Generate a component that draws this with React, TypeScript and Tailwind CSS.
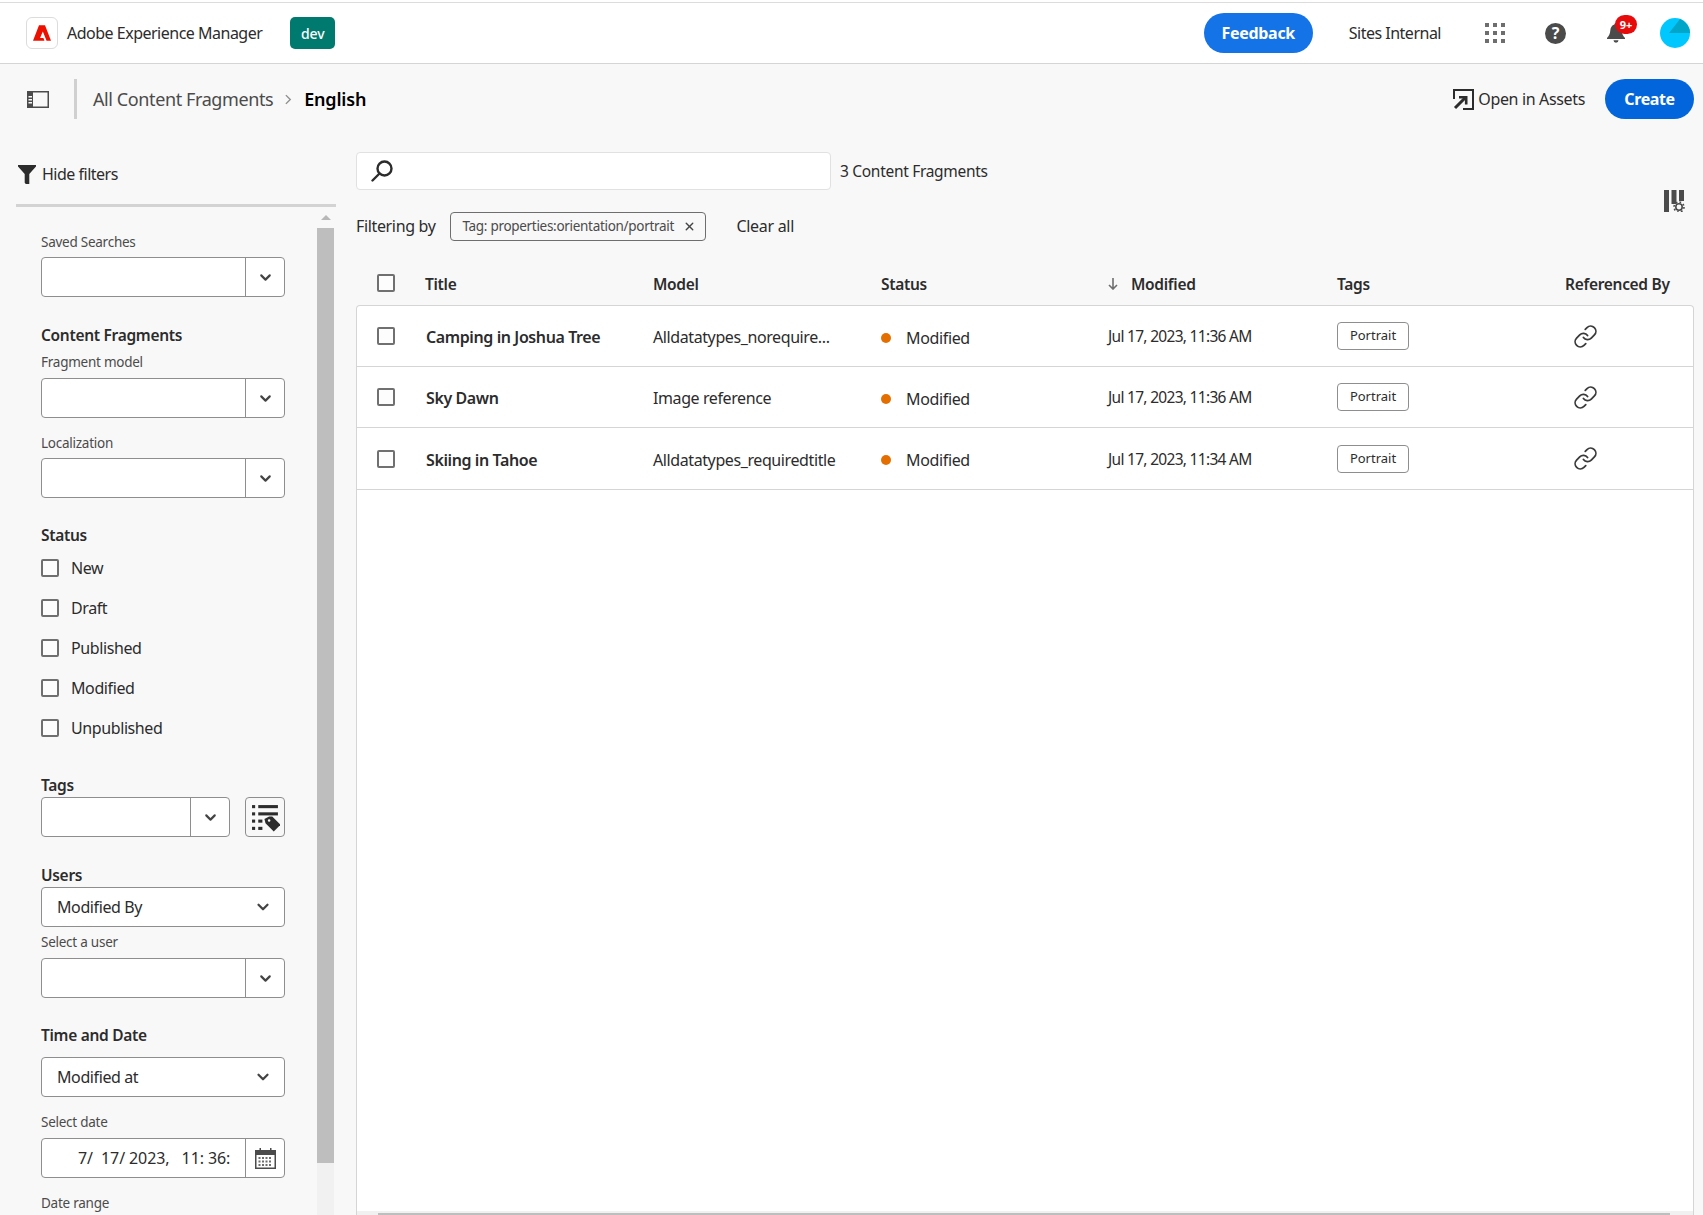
import { ChevronDown, Link as LinkIcon, X } from 'lucide-react';

const rows = [
  { title: 'Camping in Joshua Tree', model: 'Alldatatypes_norequire...', date: 'Jul 17, 2023, 11:36 AM', h: 'h-[61px]' },
  { title: 'Sky Dawn', model: 'Image reference', date: 'Jul 17, 2023, 11:36 AM', h: 'h-[61px]' },
  { title: 'Skiing in Tahoe', model: 'Alldatatypes_requiredtitle', date: 'Jul 17, 2023, 11:34 AM', h: 'h-[62px]' },
];

const statuses = ['New', 'Draft', 'Published', 'Modified', 'Unpublished'];

function Checkbox() {
  return <span className="block w-[18px] h-[18px] rounded-[2px] border-2 border-[#707070] bg-[#fdfdfd]" />;
}

function Combo({ className = '', wide = true, children }: { className?: string; wide?: boolean; children?: React.ReactNode }) {
  return (
    <div className={`flex h-[40px] ${wide ? 'w-[244px]' : 'w-[189px]'} rounded-[4px] border border-[#8e8e8e] bg-white ${className}`}>
      <div className="flex-1 min-w-0 flex items-center">{children}</div>
      <div className="w-[39px] shrink-0 border-l border-[#8e8e8e] flex items-center justify-center">
        <ChevronDown size={17} strokeWidth={3} className="text-[#444]" />
      </div>
    </div>
  );
}

function Select({ label, className = '' }: { label: string; className?: string }) {
  return (
    <div className={`flex h-[40px] w-[244px] items-center justify-between rounded-[4px] border border-[#8e8e8e] bg-white pl-[15px] pr-[12px] text-[16px] tracking-[-0.4px] text-[#2c2c2c] ${className}`}>
      <span>{label}</span>
      <ChevronDown size={18} strokeWidth={3} className="text-[#444]" />
    </div>
  );
}

function SmallLabel({ children, className = '' }: { children: React.ReactNode; className?: string }) {
  return <div className={`h-[20px] leading-[20px] text-[13.5px] tracking-[-0.25px] text-[#4b4b4b] ${className}`}>{children}</div>;
}

function Heading({ children, className = '' }: { children: React.ReactNode; className?: string }) {
  return <div className={`h-[22px] leading-[22px] text-[15.5px] font-semibold tracking-[-0.3px] text-[#2c2c2c] ${className}`}>{children}</div>;
}

function AdobeMark() {
  return (
    <svg viewBox="0 0 30 26" className="w-[18px] h-[16px]" fill="#eb1000">
      <path d="M10 0h10l10 26h-7.4l-6.2-15.5-4.6 11h5.6l1.7 4.5H0z" />
    </svg>
  );
}

function GridIcon() {
  return (
    <svg viewBox="0 0 20 20" className="w-[20px] h-[20px]" fill="#6e6e6e">
      <rect x="0" y="0" width="4" height="4" /><rect x="8" y="0" width="4" height="4" /><rect x="16" y="0" width="4" height="4" />
      <rect x="0" y="8" width="4" height="4" /><rect x="8" y="8" width="4" height="4" /><rect x="16" y="8" width="4" height="4" />
      <rect x="0" y="16" width="4" height="4" /><rect x="8" y="16" width="4" height="4" /><rect x="16" y="16" width="4" height="4" />
    </svg>
  );
}

function HelpIcon() {
  return (
    <span className="flex w-[21px] h-[21px] items-center justify-center rounded-full bg-[#4b4b4b] text-[16px] font-bold leading-none text-white">?</span>
  );
}

function BellIcon() {
  return (
    <svg viewBox="0 0 18 20" className="w-[18px] h-[20px]" fill="#4b4b4b">
      <path d="M9 0c-1 0-1.6.7-1.6 1.6C4.8 2.4 3.6 4.6 3.3 7.4 3 10.6 2.3 12.6 0 15v1h18v-1c-2.3-2.4-3-4.4-3.3-7.6-.3-2.8-1.5-5-4.1-5.8C10.6.7 10 0 9 0zM6.5 17.2a2.5 2.5 0 0 0 5 0z" />
    </svg>
  );
}

function PanelIcon() {
  return (
    <svg viewBox="0 0 22 17" className="w-[22px] h-[17px]">
      <rect x="0.75" y="0.75" width="20.5" height="15.5" fill="none" stroke="#4b4b4b" strokeWidth="1.5" />
      <rect x="0" y="0" width="6" height="17" fill="#4b4b4b" />
      <rect x="1.5" y="5" width="3.5" height="1.5" fill="#f8f8f8" />
      <rect x="1.5" y="8" width="3.5" height="1.5" fill="#f8f8f8" />
      <rect x="1.5" y="11" width="3.5" height="1.5" fill="#f8f8f8" />
    </svg>
  );
}

function FunnelIcon() {
  return (
    <svg viewBox="0 0 18 19" className="w-[18px] h-[19px]" fill="#2c2c2c">
      <path d="M0 0h18v1.5l-6.7 7.6V19H7.8l-1.1-1.2V9.1L0 1.5z" />
    </svg>
  );
}

function SearchIcon() {
  return (
    <svg viewBox="0 0 22 22" className="w-[22px] h-[22px]" fill="none" stroke="#2c2c2c" strokeWidth="2.4">
      <circle cx="13.5" cy="8.5" r="7" />
      <path d="M8.5 13.5 1.5 20.5" strokeLinecap="round" />
    </svg>
  );
}

function OpenInIcon() {
  return (
    <svg viewBox="0 0 21 21" className="w-[21px] h-[21px]" fill="none" stroke="#2c2c2c">
      <path d="M1 10V1h19v19H10" strokeWidth="2" />
      <path d="M2 19 13 8" strokeWidth="3" />
      <path d="M6 7h8.5v8.5h-2.6V9.6H6z" fill="#2c2c2c" stroke="none" />
    </svg>
  );
}

function ColumnsIcon() {
  return (
    <svg viewBox="0 0 21 22" className="w-[21px] h-[22px]">
      <rect x="0" y="0" width="5" height="22" fill="#4b4b4b" />
      <rect x="7.5" y="0" width="5" height="14" fill="#4b4b4b" />
      <rect x="15" y="0" width="5" height="11" fill="#4b4b4b" />
      <circle cx="15" cy="17" r="3.2" fill="none" stroke="#4b4b4b" strokeWidth="1.6" />
      <circle cx="15" cy="17" r="5" fill="none" stroke="#4b4b4b" strokeWidth="1.6" strokeDasharray="1.8 2.1" />
    </svg>
  );
}

function TagListIcon() {
  return (
    <svg viewBox="0 0 28 28" className="w-[29px] h-[29px]" fill="#2c2c2c">
      <rect x="1" y="2" width="3" height="3" /><rect x="7" y="2" width="19" height="3" />
      <rect x="1" y="9" width="3" height="3" /><rect x="7" y="9" width="19" height="3" />
      <rect x="1" y="16" width="3" height="3" /><rect x="7" y="16" width="4" height="3" />
      <rect x="1" y="23" width="3" height="3" /><rect x="7" y="23" width="4" height="3" />
      <path d="M13 15.5 17.5 13h3l8 8-6.5 6.5-8-8z" />
      <circle cx="17.5" cy="17" r="1.2" fill="#f8f8f8" />
    </svg>
  );
}

function CalendarIcon() {
  return (
    <svg viewBox="0 0 21 21" className="w-[21px] h-[21px]">
      <rect x="0.75" y="2.75" width="19.5" height="17.5" fill="none" stroke="#4b4b4b" strokeWidth="1.5" />
      <rect x="1" y="3" width="19" height="4" fill="#4b4b4b" />
      <rect x="4.5" y="0" width="1.5" height="4" fill="#4b4b4b" /><rect x="15" y="0" width="1.5" height="4" fill="#4b4b4b" />
      <path d="M3.5 9h2v2h-2zM7 9h2v2H7zM10.5 9h2v2h-2zM14 9h2v2h-2zM3.5 12.5h2v2h-2zM7 12.5h2v2H7zM10.5 12.5h2v2h-2zM14 12.5h2v2h-2zM3.5 16h2v2h-2zM7 16h2v2H7zM10.5 16h2v2h-2zM14 16h2v2h-2z" fill="#6e6e6e" />
    </svg>
  );
}

function Filters() {
  return (
    <div className="w-[299px] shrink-0 overflow-hidden pl-[25px] pt-[25px]">
      <SmallLabel>Saved Searches</SmallLabel>
      <Combo className="mt-[5px]" />
      <Heading className="mt-[27px]">Content Fragments</Heading>
      <SmallLabel className="mt-[6px]">Fragment model</SmallLabel>
      <Combo className="mt-[6px]" />
      <SmallLabel className="mt-[15px]">Localization</SmallLabel>
      <Combo className="mt-[5px]" />
      <Heading className="mt-[26px]">Status</Heading>
      <div className="mt-[2px]">
        {statuses.map((s) => (
          <div key={s} className="flex h-[40px] items-center gap-[12px] text-[16px] tracking-[-0.4px] text-[#2c2c2c]">
            <Checkbox />
            <span>{s}</span>
          </div>
        ))}
      </div>
      <Heading className="mt-[26px]">Tags</Heading>
      <div className="mt-[1px] flex w-[244px] justify-between">
        <Combo wide={false} />
        <button className="flex h-[40px] w-[40px] items-center justify-center rounded-[4px] border border-[#8e8e8e] bg-[#f8f8f8]">
          <TagListIcon />
        </button>
      </div>
      <Heading className="mt-[27px]">Users</Heading>
      <Select label="Modified By" className="mt-[1px]" />
      <SmallLabel className="mt-[5px]">Select a user</SmallLabel>
      <Combo className="mt-[6px]" />
      <Heading className="mt-[26px]">Time and Date</Heading>
      <Select label="Modified at" className="mt-[11px]" />
      <SmallLabel className="mt-[15px]">Select date</SmallLabel>
      <div className="mt-[6px] flex h-[40px] w-[244px] rounded-[4px] border border-[#8e8e8e] bg-white">
        <div className="flex-1 min-w-0 overflow-hidden whitespace-pre pl-[36px] text-[16px] leading-[38px] tracking-[-0.1px] text-[#2c2c2c]">7/  17/ 2023,   11: 36:</div>
        <div className="w-[39px] shrink-0 border-l border-[#8e8e8e] flex items-center justify-center">
          <CalendarIcon />
        </div>
      </div>
      <SmallLabel className="mt-[15px]">Date range</SmallLabel>
    </div>
  );
}

function TableGridRow({ children, className = '' }: { children: React.ReactNode; className?: string }) {
  return (
    <div className={`grid grid-cols-[48px_228px_228px_227px_229px_228px_1fr] items-center ${className}`}>{children}</div>
  );
}

export default function App() {
  return (
    <div className="flex h-[1215px] w-full flex-col overflow-hidden bg-[#f8f8f8] font-['Noto_Sans',sans-serif] text-[#2c2c2c]">
      <header className="h-[64px] shrink-0 bg-white pt-[2px]">
        <div className="flex h-[62px] items-center border-y border-t-[#dcdcdc] border-b-[#d5d5d5] pl-[26px] pr-[13px]">
          <div className="flex h-[32px] w-[32px] items-center justify-center rounded-[6px] border border-[#dcdcdc] bg-white">
            <AdobeMark />
          </div>
          <span className="ml-[9px] text-[16px] tracking-[-0.5px]">Adobe Experience Manager</span>
          <span className="ml-[28px] flex h-[32px] w-[45px] items-center justify-center rounded-[5px] bg-[#007a6f] text-[14px] font-medium text-white">dev</span>
          <button className="ml-auto flex h-[40px] w-[109px] items-center justify-center rounded-full bg-[#1473e6] text-[16px] font-bold tracking-[-0.3px] text-white">Feedback</button>
          <span className="ml-[36px] text-[16px] tracking-[-0.5px]">Sites Internal</span>
          <span className="ml-[44px]"><GridIcon /></span>
          <span className="ml-[40px]"><HelpIcon /></span>
          <span className="relative ml-[41px] block">
            <BellIcon />
            <span className="absolute -right-[12px] -top-[8px] flex h-[19px] w-[22px] items-center justify-center rounded-full bg-[#e80b0b] text-[11px] font-bold leading-none text-white">9+</span>
          </span>
          <svg viewBox="0 0 30 30" className="ml-[35px] h-[30px] w-[30px]">
            <circle cx="15" cy="15" r="15" fill="#00c8ff" />
            <path d="M9 15 20 1a15 15 0 0 1 10 14z" fill="#00a5c8" />
          </svg>
        </div>
      </header>

      <div className="flex h-[70px] shrink-0 items-center pl-[27px] pr-[9px]">
        <PanelIcon />
        <span className="ml-[25px] h-[40px] w-[3px] bg-[#d0d0d0]" />
        <span className="ml-[16px] text-[18px] tracking-[-0.4px] text-[#4b4b4b]">All Content Fragments</span>
        <svg viewBox="0 0 8 12" className="ml-[12px] h-[11px] w-[7px]" fill="none" stroke="#8e8e8e" strokeWidth="1.6">
          <path d="M1 1l5 5-5 5" />
        </svg>
        <span className="ml-[12px] text-[18px] font-semibold tracking-[-0.2px] text-black">English</span>
        <span className="ml-auto"><OpenInIcon /></span>
        <span className="ml-[4px] text-[16px] tracking-[-0.35px]">Open in Assets</span>
        <button className="ml-[20px] flex h-[40px] w-[89px] items-center justify-center rounded-full bg-[#0265dc] text-[16px] font-bold tracking-[-0.4px] text-white">Create</button>
      </div>

      <div className="flex min-h-0 flex-1">
        <aside className="ml-[16px] flex w-[320px] shrink-0 flex-col">
          <div className="flex h-[73px] shrink-0 items-center gap-[6px] border-b-[3px] border-[#d3d3d3] pl-[2px] pt-[10px] text-[16px]">
            <FunnelIcon />
            <span className="tracking-[-0.5px]">Hide filters</span>
          </div>
          <div className="flex min-h-0 flex-1">
            <Filters />
            <div className="flex w-[21px] flex-col bg-[#f8f8f8] pl-[2px] pr-[2px]">
              <div className="flex h-[21px] shrink-0 items-center justify-center">
                <span className="block h-0 w-0 border-x-[5px] border-b-[5px] border-x-transparent border-b-[#b8b8b8]" />
              </div>
              <div className="h-[935px] shrink-0 bg-[#bebebe]" />
              <div className="flex-1 bg-[#f1f1f1]" />
            </div>
          </div>
        </aside>

        <main className="ml-[20px] mr-[9px] flex min-w-0 flex-1 flex-col pt-[18px]">
          <div className="flex items-center">
            <div className="flex h-[38px] w-[475px] items-center rounded-[4px] border border-[#e1e1e1] bg-white pl-[14px]">
              <SearchIcon />
            </div>
            <span className="ml-[9px] pt-[2px] text-[15.5px] tracking-[-0.3px]">3 Content Fragments</span>
          </div>
          <div className="mt-[22px] flex h-[29px] items-center">
            <span className="-mt-[1px] text-[16px] tracking-[-0.35px]">Filtering by</span>
            <span className="ml-[15px] flex h-[29px] w-[256px] items-center justify-between rounded-[4px] border border-[#6e6e6e] pl-[11px] pr-[9px] text-[13.5px] tracking-[-0.3px] text-[#4b4b4b]">
              Tag: properties:orientation/portrait
              <X size={13} strokeWidth={2.5} className="text-[#444]" />
            </span>
            <span className="-mt-[1px] ml-[30px] text-[16px] tracking-[-0.3px]">Clear all</span>
            <span className="-mt-[22px] ml-auto mr-[9px] self-start"><ColumnsIcon /></span>
          </div>
          <TableGridRow className="h-[64px] shrink-0 pl-[21px] pt-[20px] text-[15.5px] font-semibold tracking-[-0.3px]">
            <Checkbox />
            <span className="pt-[4px]">Title</span>
            <span className="pt-[4px]">Model</span>
            <span className="pt-[4px]">Status</span>
            <span className="flex items-center gap-[13px] pt-[4px]">
              <svg viewBox="0 0 10 12" className="-mt-[3px] h-[12px] w-[10px]" fill="none" stroke="#6e6e6e" strokeWidth="1.6">
                <path d="M5 0v11M1 7l4 4 4-4" />
              </svg>
              Modified
            </span>
            <span className="pt-[4px]">Tags</span>
            <span className="pt-[4px]">Referenced By</span>
          </TableGridRow>

          <div className="flex min-h-0 flex-1 flex-col rounded-t-[4px] border-x border-t border-[#d5d5d5] bg-white">
            {rows.map((r) => (
              <TableGridRow key={r.title} className={`${r.h} shrink-0 border-b border-[#d5d5d5] pl-[20px] text-[16px]`}>
                <Checkbox />
                <span className="pl-[1px] pt-[2px] font-semibold tracking-[-0.4px]">{r.title}</span>
                <span className="pt-[2px] tracking-[-0.4px]">{r.model}</span>
                <span className="flex items-center gap-[15px] pt-[3px] tracking-[-0.35px]">
                  <span className="h-[10px] w-[10px] rounded-full bg-[#e46f00]" />
                  Modified
                </span>
                <span className="pt-[2px] text-[15.5px] tracking-[-0.7px]">{r.date}</span>
                <span>
                  <span className="flex h-[28px] w-[72px] items-center justify-center rounded-[4px] border border-[#8e8e8e] text-[13px]">Portrait</span>
                </span>
                <span className="pl-[8px]">
                  <LinkIcon size={25} strokeWidth={1.7} className="text-[#3a3a3a]" />
                </span>
              </TableGridRow>
            ))}
            <div className="flex-1" />
            <div className="h-[4px] shrink-0 bg-[#f1f1f1] pl-[21px] pr-[23px] pt-[2px]">
              <div className="h-[2px] bg-[#bebebe]" />
            </div>
          </div>
        </main>
      </div>
    </div>
  );
}
